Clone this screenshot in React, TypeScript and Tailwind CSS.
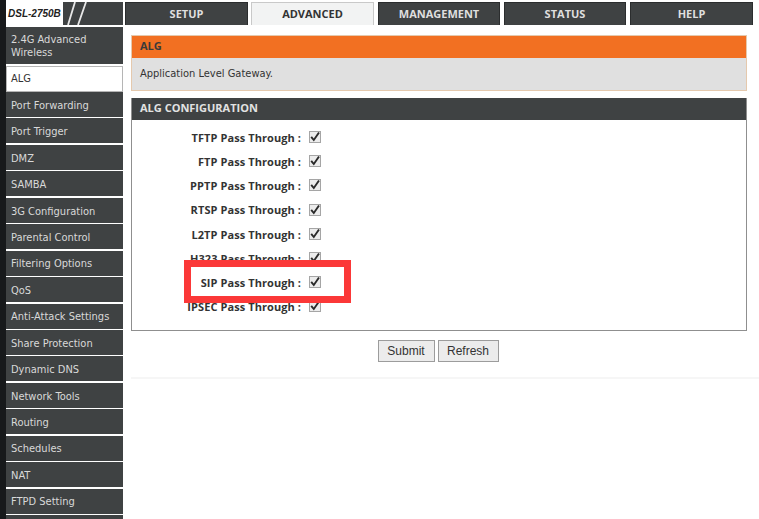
import React from "react";

const side = [
  "Port Forwarding", "Port Trigger", "DMZ", "SAMBA", "3G Configuration", "Parental Control",
  "Filtering Options", "QoS", "Anti-Attack Settings", "Share Protection", "Dynamic DNS",
  "Network Tools", "Routing", "Schedules", "NAT", "FTPD Setting",
];
const tabs = [
  { t: "SETUP", w: "w-[123px]", m: "ml-0" },
  { t: "ADVANCED", w: "w-[123px]", m: "ml-[3px]" },
  { t: "MANAGEMENT", w: "w-[122px]", m: "ml-[4px]" },
  { t: "STATUS", w: "w-[122px]", m: "ml-[4px]" },
  { t: "HELP", w: "w-[123px]", m: "ml-[4px]" },
];
const rows = ["TFTP", "FTP", "PPTP", "RTSP", "L2TP", "H323", "SIP", "IPSEC"];

function Check() {
  return (
    <span className="flex h-[12px] w-[12px] items-center justify-center border border-[#a5a5a5] bg-[#ececec]">
      <svg viewBox="0 0 12 12" className="h-[12px] w-[12px] shrink-0">
        <path d="M2.2 5.8 L4.8 9 L10 1.5" fill="none" stroke="#2a2a2a" strokeWidth="1.9" />
      </svg>
    </span>
  );
}

export default function App() {
  return (
    <div className="relative h-[519px] w-[759px] overflow-hidden bg-white font-['DejaVu_Sans_Condensed','DejaVu_Sans',sans-serif] text-[#333]">
      <div className="flex h-full">
        <div className="h-full w-[6px] shrink-0 bg-[#17191b]" />
        <div className="flex h-full min-w-0 flex-1 flex-col pt-[2px]">
          <div className="flex h-[23px] shrink-0">
            <div className="relative flex h-full w-[117px] items-center overflow-hidden bg-[#3f4243]">
              <div className="flex h-[23px] w-[57px] items-center bg-white pl-[2px] font-['Liberation_Sans',sans-serif] text-[10px] font-bold italic text-[#222]">
                DSL-2750B
              </div>
              <svg viewBox="0 0 24 23" className="ml-[3px] h-[23px] w-[24px]">
                <path d="M2 23 L9 0 M12 23 L20 0" stroke="#e8e8e8" strokeWidth="1.8" />
              </svg>
            </div>
            <div className="ml-[2px] flex">
              {tabs.map((x) => (
                <div
                  key={x.t}
                  className={`${x.w} ${x.m} flex h-full items-center justify-center border-x border-t border-[#2b2d2e] font-['Open_Sans',sans-serif] text-[11px] font-bold ${
                    x.t === "ADVANCED" ? "border-[#c9c9c9] bg-[#f2f3f3] text-[#333]" : "bg-[#3f4243] text-[#dfdfdf]"
                  }`}
                >
                  {x.t}
                </div>
              ))}
            </div>
          </div>
          <div className="flex min-h-0 flex-1">
            <div className="w-[117px] shrink-0 text-[11px]">
              <div className="mt-[2px] flex h-[37px] items-center bg-[#3f4243] pl-[5px] pt-[1px] leading-[13px] text-[#d9d9d9]">
                <span>2.4G Advanced<br />Wireless</span>
              </div>
              <div className="mt-[2px] flex h-[26px] items-center border border-[#b5b5b5] bg-white pl-[4px] pt-[1px] text-[#333]">
                ALG
              </div>
              {side.map((s) => (
                <div
                  key={s}
                  className="mb-[1.45px] flex h-[25px] items-center bg-[#3f4243] pl-[5px] pt-[3px] text-[#d9d9d9] first:mt-[1px]"
                >
                  {s}
                </div>
              ))}
              <div className="h-[10px] bg-[#3f4243]" />
            </div>
            <div className="ml-[8px] w-[616px] shrink-0 pt-[10px]">
              <div className="border border-[#e5c9ad] bg-[#e0e0e0]">
                <div className="flex h-[22px] items-center bg-[#f27022] pb-[1px] pl-[8px] font-['Open_Sans',sans-serif] text-[11px] font-bold text-[#3a3a3a]">
                  ALG
                </div>
                <div className="mt-[1px] flex h-[31px] items-center pl-[8px] text-[11px] text-[#333]">
                  Application Level Gateway.
                </div>
              </div>
              <div className="mt-[7px] h-[233px] border border-t-0 border-[#8f8f8f]">
                <div className="flex h-[22px] items-center bg-[#3f4243] pb-[1px] pl-[8px] font-['Open_Sans',sans-serif] text-[11px] font-bold text-[#e2e2e2]">
                  ALG CONFIGURATION
                </div>
                <div className="flex flex-col pt-[5px]">
                  {rows.map((r) => (
                    <div key={r} className="flex h-[24.2px] items-center">
                      <div className="w-[169px] pt-[2px] text-right font-['Open_Sans',sans-serif] text-[11px] font-bold tracking-[0.08px] text-[#333]">
                        {r} Pass Through :
                      </div>
                      <div className="ml-[8px]">
                        <Check />
                      </div>
                    </div>
                  ))}
                </div>
              </div>
              <div className="mt-[9px] flex justify-center gap-[3px] pr-[2px] font-['Liberation_Sans',sans-serif] text-[12px] text-[#333]">
                <div className="flex h-[22px] w-[57px] items-center justify-center border border-[#9c9c9c] bg-[#ececec]">Submit</div>
                <div className="flex h-[22px] w-[61px] items-center justify-center border border-[#9c9c9c] bg-[#ececec]">Refresh</div>
              </div>
              <div className="mt-[15px] h-[2px] w-[640px] bg-[#f6f6f6]" />
            </div>
          </div>
        </div>
      </div>
      <div className="absolute left-[184px] top-[260px] h-[43px] w-[167px] border-[7px] border-[#fb3838]" />
    </div>
  );
}
